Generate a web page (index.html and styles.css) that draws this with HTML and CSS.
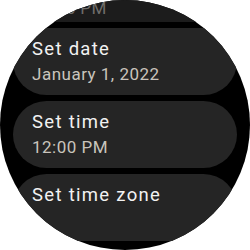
FILE: index.html
```html
<!DOCTYPE html>
<html lang="en">

<head>
    <meta charset="UTF-8">
    <title>Date &amp; time</title>
    <link rel="stylesheet" href="styles.css">
</head>

<body>
    <div class="watch">
        <div class="list">
            <div class="chip faded">
                <div class="label">Automatic time</div>
                <div class="secondary">12:00 PM</div>
            </div>
            <div class="chip">
                <div class="label">Set date</div>
                <div class="secondary">January 1, 2022</div>
            </div>
            <div class="chip">
                <div class="label">Set time</div>
                <div class="secondary">12:00 PM</div>
            </div>
            <div class="chip">
                <div class="label">Set time zone</div>
            </div>
        </div>
    </div>
</body>

</html>
```

FILE: styles.css
```css
body {
    margin: 0;
    background: #fff;
    font-family: Roboto, sans-serif;
}

.watch {
    width: 250px;
    height: 250px;
    border-radius: 50%;
    background: #000;
    overflow: hidden;
}

.list {
    display: flex;
    flex-direction: column;
    gap: 6px;
    margin-top: -45px;
    padding: 0 13px;
}

.chip {
    height: 67px;
    box-sizing: border-box;
    padding: 9px 19px 0;
    background: #252525;
    border-radius: 34px;
}

.label {
    font-size: 18.5px;
    letter-spacing: 1.3px;
    line-height: 24px;
    color: #f2f2f2;
}

.secondary {
    font-size: 17px;
    letter-spacing: 0.5px;
    line-height: 27px;
    color: #c9c4bc;
}

.faded {
    padding-top: 16px;
    background: #1c1c1c;
}

.faded .label {
    color: #555;
}

.faded .secondary {
    color: #6f6d6a;
    letter-spacing: 0.3px;
}
```
